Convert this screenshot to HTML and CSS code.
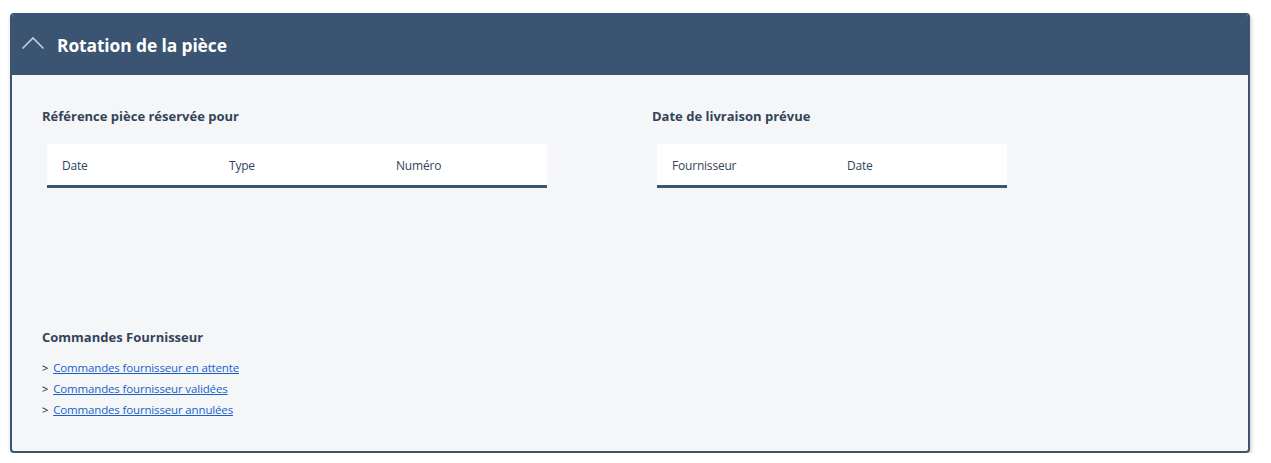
FILE: index.html
```html
<!DOCTYPE html>
<html lang="fr">
<head>
<meta charset="utf-8">
<title>Rotation de la pièce</title>
<link rel="stylesheet" href="styles.css">
</head>
<body>
<div class="card">
  <div class="card-header">
    <svg class="chevron" width="24" height="14" viewBox="0 0 24 14"><path d="M1.5 12.5 L12 2 L22.5 12.5" fill="none" stroke="#c5ceda" stroke-width="1.6"/></svg>
    <h2 class="card-title">Rotation de la pièce</h2>
  </div>
  <div class="card-body">
    <div class="columns">
      <section class="col col-left">
        <h3 class="section-title">Référence pièce réservée pour</h3>
        <div class="table table-3">
          <div class="th">Date</div>
          <div class="th">Type</div>
          <div class="th">Numéro</div>
        </div>
      </section>
      <section class="col">
        <h3 class="section-title">Date de livraison prévue</h3>
        <div class="table table-2">
          <div class="th">Fournisseur</div>
          <div class="th">Date</div>
        </div>
      </section>
    </div>
    <section class="orders">
      <h3 class="section-title">Commandes Fournisseur</h3>
      <ul class="links">
        <li><span class="gt">&gt;</span><a href="#">Commandes fournisseur en attente</a></li>
        <li><span class="gt">&gt;</span><a href="#">Commandes fournisseur validées</a></li>
        <li><span class="gt">&gt;</span><a href="#">Commandes fournisseur annulées</a></li>
      </ul>
    </section>
  </div>
</div>
</body>
</html>
```
FILE: styles.css
```css
* { box-sizing: border-box; }
html, body { margin: 0; padding: 0; background: #ffffff; }
body {
  font-family: "Open Sans", "Noto Sans", "Liberation Sans", sans-serif;
  padding: 13px 21px 0 10px;
}
.card {
  border: 2px solid #3a5472;
  border-radius: 4px;
  background: #f5f6f8;
  box-shadow: 1px 2px 4px rgba(0,0,0,0.22);
  overflow: hidden;
  height: 440px;
}
.card-header {
  background: #3a5472;
  height: 60px;
  display: flex;
  align-items: center;
  padding-left: 9px;
}
.chevron { display: block; margin-top: -4px; }
.card-title {
  margin: 0 0 0 12px;
  color: #ffffff;
  font-size: 17.4px;
  font-weight: 700;
  letter-spacing: -0.1px;
}
.card-body {
  padding: 32px 30px 0 30px;
}
.columns {
  display: grid;
  grid-template-columns: 610px 1fr;
  height: 221px;
}
.section-title {
  margin: 0;
  font-size: 13px;
  line-height: 18px;
  font-weight: 700;
  color: #33445a;
  letter-spacing: 0;
}
.table {
  margin: 19px 0 0 5px;
  background: #ffffff;
  border-bottom: 3px solid #3a5472;
  display: grid;
  height: 44px;
}
.table-3 { width: 500px; grid-template-columns: 167px 167px 166px; }
.table-2 { width: 350px; grid-template-columns: 175px 175px; }
.th {
  font-size: 12px;
  color: #33445a;
  padding: 2px 0 0 15px;
  display: flex;
  align-items: center;
  letter-spacing: -0.2px;
}
.links {
  list-style: none;
  margin: 11px 0 0 0;
  padding: 0;
}
.links li {
  font-size: 11.5px;
  line-height: 21px;
  color: #111;
  letter-spacing: -0.15px;
}
.gt { font-size: 11px; margin-right: 5px; }
.links a {
  color: #1a5fc9;
  text-decoration: underline;
}
```
